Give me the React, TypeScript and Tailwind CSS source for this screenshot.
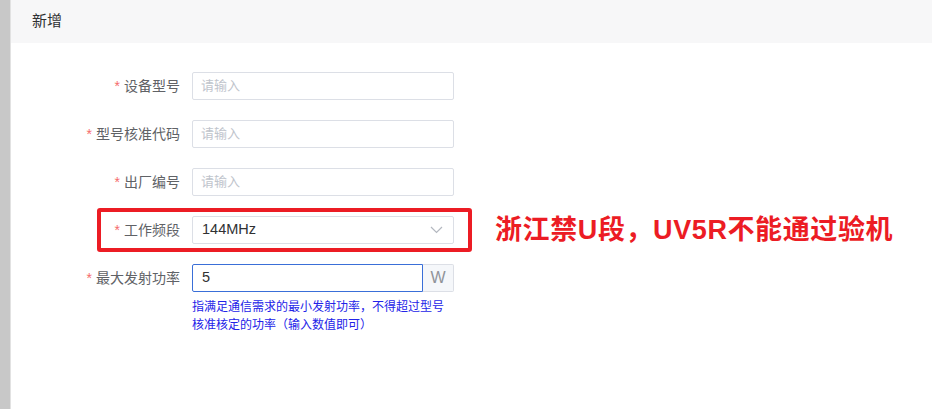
const fontStack = { fontFamily: '"Liberation Sans", "Noto Sans CJK SC", sans-serif' };

const Label = ({ text }: { text: string }) => {
  return (
    <div className="flex w-[169px] shrink-0 items-center justify-end text-[14px] text-[#606266]">
      <span className="mr-1 text-[#f56c6c]">*</span>
      {text}
    </div>
  );
};

const TextInput = ({ placeholder }: { placeholder: string }) => {
  return (
    <div className="ml-3 flex h-[28px] w-[262px] items-center rounded-[2px] border border-[#dcdfe6] px-[8px] text-[13px] text-[#c0c4cc]">
      {placeholder}
    </div>
  );
};

const App = () => {
  return (
    <div className="flex min-h-screen w-full bg-white" style={fontStack}>
      {/* left strip */}
      <div className="w-[10px] shrink-0 bg-[#c8c8c8]" />
      <div className="w-px shrink-0 bg-[#e2e2e2]" />
      {/* page */}
      <div className="flex flex-1 flex-col">
        {/* header */}
        <div className="flex h-[43px] items-center bg-[#f7f7f8] pl-[21px] text-[15px] text-[#303133]">
          新增
        </div>
        {/* form */}
        <div className="flex flex-col gap-5 pt-[29px]">
          <div className="flex items-center">
            <Label text="设备型号" />
            <TextInput placeholder="请输入" />
          </div>
          <div className="flex items-center">
            <Label text="型号核准代码" />
            <TextInput placeholder="请输入" />
          </div>
          <div className="flex items-center">
            <Label text="出厂编号" />
            <TextInput placeholder="请输入" />
          </div>
          {/* highlighted row */}
          <div className="relative flex items-center">
            <Label text="工作频段" />
            <div className="ml-3 flex h-[28px] w-[262px] items-center justify-between rounded-[2px] border border-[#dcdfe6] pl-[9px] pr-[10px] text-[14.5px] text-[#303133]">
              144MHz
              <svg width="13" height="8" viewBox="0 0 13 8" fill="none">
                <path d="M1 1l5.5 5.5L12 1" stroke="#b4b8c0" strokeWidth="1.2" />
              </svg>
            </div>
            {/* red annotation box */}
            <div className="absolute left-[86px] top-[-8px] h-[44px] w-[375px] rounded-[3px] border-4 border-[#ec1c24]" />
            <div className="absolute left-[484px] top-[-2px] text-[27px] font-bold leading-[32px] tracking-[0.6px] text-[#ec1c24]">
              浙江禁U段，UV5R不能通过验机
            </div>
          </div>
          <div className="flex items-start">
            <div className="flex h-[28px] items-center">
              <Label text="最大发射功率" />
            </div>
            <div className="ml-3 flex w-[262px] flex-col">
              <div className="flex h-[28px]">
                <div className="flex flex-1 items-center rounded-l-[2px] border border-[#3a6fd8] px-[9px] text-[14.5px] text-[#303133]">
                  5
                </div>
                <div className="flex w-[31px] items-center justify-center rounded-r-[2px] border border-l-0 border-[#dcdfe6] bg-[#f5f7fa] text-[16px] text-[#909399]">
                  W
                </div>
              </div>
              <div className="mt-[6px] text-[12px] leading-[18px] text-[#2323e8]">
                指满足通信需求的最小发射功率，不得超过型号核准核定的功率（输入数值即可）
              </div>
            </div>
          </div>
        </div>
      </div>
    </div>
  );
};

export default App;
